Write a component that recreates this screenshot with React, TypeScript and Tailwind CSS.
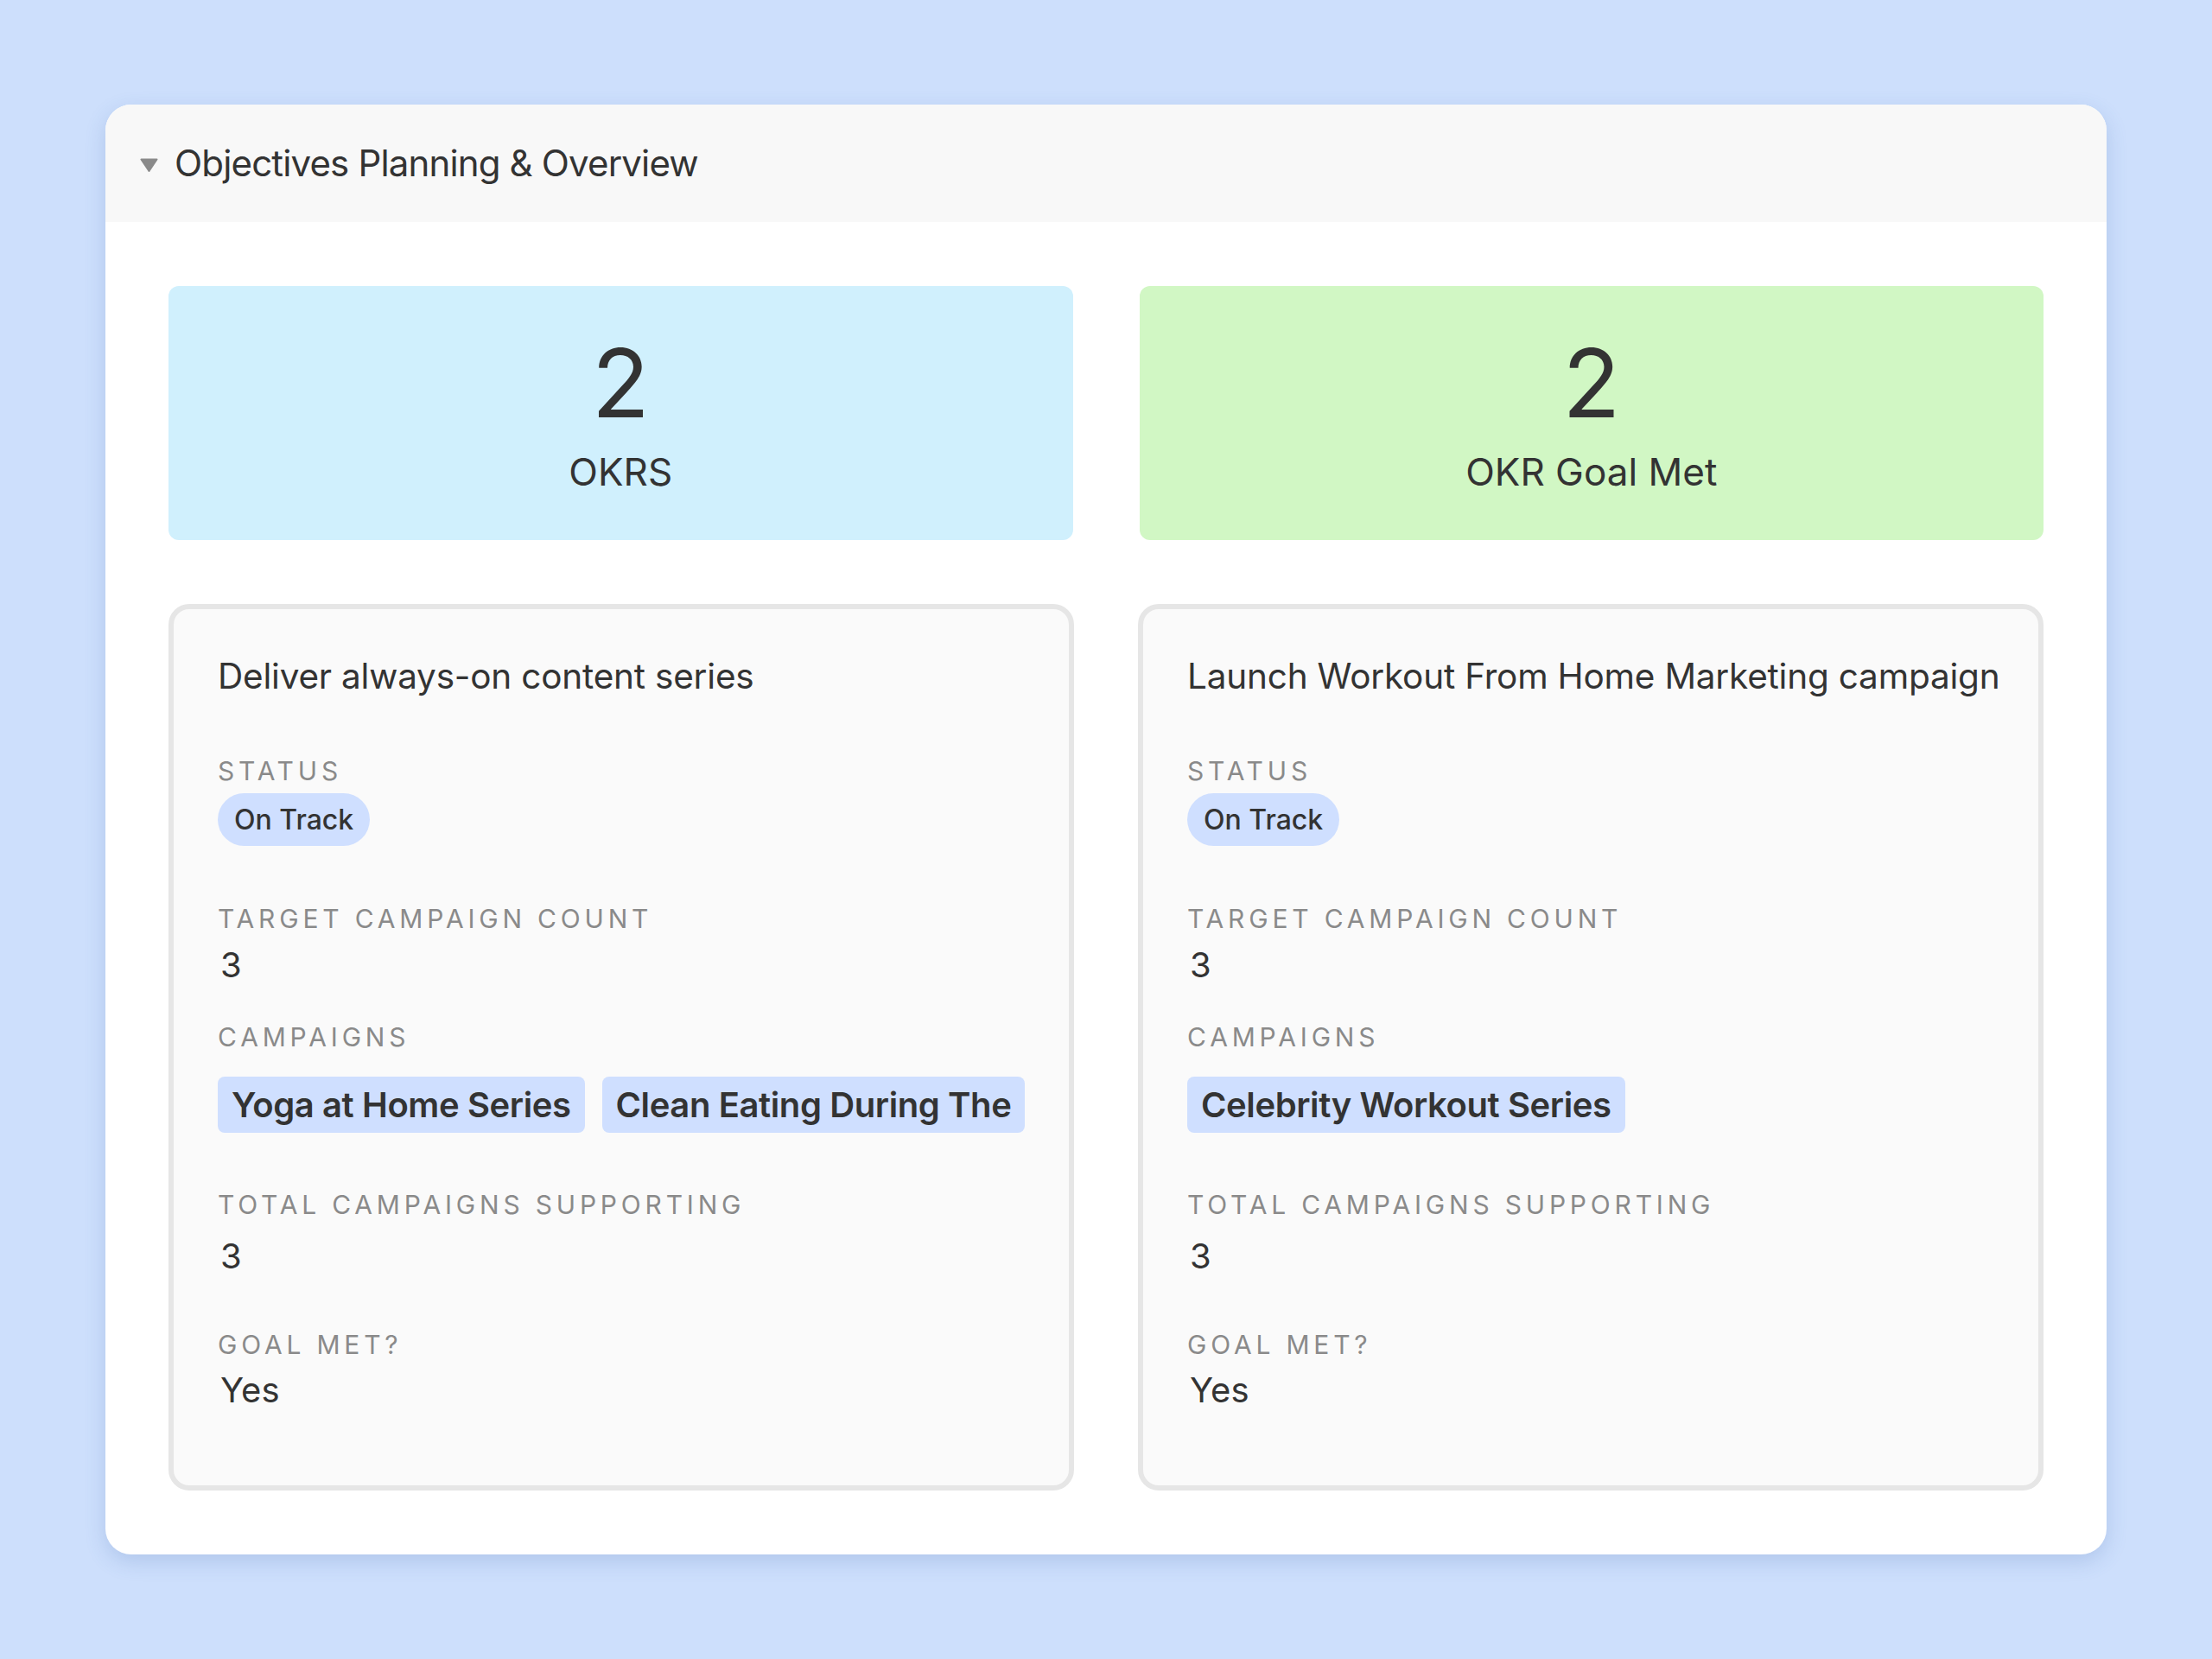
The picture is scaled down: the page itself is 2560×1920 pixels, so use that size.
import React from "react";

type Objective = {
  title: string;
  status: string;
  target: number;
  campaigns: string[];
  total: number;
  goalMet: string;
};

const objectives: Objective[] = [
  {
    title: "Deliver always-on content series",
    status: "On Track",
    target: 3,
    campaigns: ["Yoga at Home Series", "Clean Eating During The"],
    total: 3,
    goalMet: "Yes",
  },
  {
    title: "Launch Workout From Home Marketing campaign",
    status: "On Track",
    target: 3,
    campaigns: ["Celebrity Workout Series"],
    total: 3,
    goalMet: "Yes",
  },
];

function Label({ children, className = "" }: { children: React.ReactNode; className?: string }) {
  return (
    <div className={`text-[30px] leading-[36px] tracking-[0.16em] uppercase text-[#8a8a8a] ${className}`}>
      {children}
    </div>
  );
}

function StatBox({ value, label, color }: { value: number; label: string; color: string }) {
  return (
    <div className={`h-[294px] rounded-[12px] flex flex-col items-center justify-center text-[#333] ${color}`}>
      <div className="text-[110px] leading-[120px]">{value}</div>
      <div className="text-[44px] leading-[54px] mt-[16px]">{label}</div>
    </div>
  );
}

function ObjectiveCard({ item }: { item: Objective }) {
  return (
    <div className="border-[6px] border-[#e6e6e6] rounded-[24px] bg-[#fafafa] pl-[51px] pr-[48px] pt-[54px] pb-[86px] text-[#333] min-w-0">
      <div className="text-[40.5px] leading-[48px] tracking-[-0.005em] whitespace-nowrap">{item.title}</div>

      <Label className="mt-[67px]">Status</Label>
      <div className="mt-[8px] flex">
        <span className="h-[61px] px-[19px] rounded-full bg-[#cfdfff] text-[32px] leading-[61px] font-medium">
          {item.status}
        </span>
      </div>

      <Label className="mt-[66px]">Target campaign count</Label>
      <div className="mt-[12px] pl-[3px] text-[40px] leading-[48px]">{item.target}</div>

      <Label className="mt-[41px]">Campaigns</Label>
      <div className="mt-[28px] flex gap-[20px] min-w-0">
        {item.campaigns.map((c) => (
          <span
            key={c}
            className="h-[65px] px-[16px] rounded-[8px] bg-[#cfdfff] text-[40px] leading-[65px] font-semibold tracking-[-0.01em] whitespace-nowrap overflow-hidden"
          >
            {c}
          </span>
        ))}
      </div>

      <Label className="mt-[65px]">Total campaigns supporting</Label>
      <div className="mt-[18px] pl-[3px] text-[40px] leading-[48px]">{item.total}</div>

      <Label className="mt-[60px]">Goal met?</Label>
      <div className="mt-[11px] pl-[3px] text-[40px] leading-[48px]">{item.goalMet}</div>
    </div>
  );
}

export default function App() {
  return (
    <div className="min-h-screen bg-[#cddffc] px-[122px] pt-[121px] pb-[122px] font-['Inter','Liberation_Sans',sans-serif]">
      <div className="rounded-[30px] bg-white overflow-hidden shadow-[0_8px_24px_rgba(60,100,170,0.2)]">
        {/* header */}
        <div className="h-[136px] bg-[#f8f8f8] flex items-center pl-[40px] gap-[19px]">
          <svg width="21" height="16" viewBox="0 0 21 16" className="mt-[4px]">
            <path d="M1.5 1.5 H19.5 L10.5 15 Z" fill="#8a8a8a" stroke="#8a8a8a" strokeWidth="2" strokeLinejoin="round" />
          </svg>
          <h1 className="text-[42px] leading-none text-[#333] tracking-[-0.02em]">Objectives Planning &amp; Overview</h1>
        </div>

        <div className="px-[73px] py-[74px] flex flex-col gap-[74px]">
          <div className="grid grid-cols-2 gap-x-[77px]">
            <StatBox value={2} label="OKRS" color="bg-[#d0f0fd]" />
            <StatBox value={2} label="OKR Goal Met" color="bg-[#d1f7c4]" />
          </div>

          <div className="grid grid-cols-2 gap-x-[74px]">
            {objectives.map((o) => (
              <ObjectiveCard key={o.title} item={o} />
            ))}
          </div>
        </div>
      </div>
    </div>
  );
}
